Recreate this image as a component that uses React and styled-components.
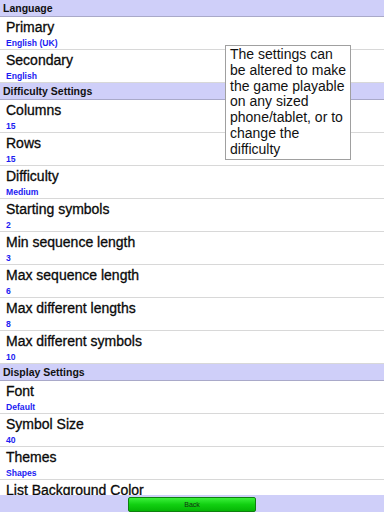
import React from "react";
import styled, { createGlobalStyle } from "styled-components";

const GlobalStyle = createGlobalStyle`
  html, body {
    margin: 0;
    padding: 0;
    background: #ffffff;
    font-family: "Liberation Sans", Arial, sans-serif;
  }
`;

const sections = [
  {
    title: "Language",
    items: [
      { name: "Primary", value: "English (UK)" },
      { name: "Secondary", value: "English" },
    ],
  },
  {
    title: "Difficulty Settings",
    items: [
      { name: "Columns", value: "15" },
      { name: "Rows", value: "15" },
      { name: "Difficulty", value: "Medium" },
      { name: "Starting symbols", value: "2" },
      { name: "Min sequence length", value: "3" },
      { name: "Max sequence length", value: "6" },
      { name: "Max different lengths", value: "8" },
      { name: "Max different symbols", value: "10" },
    ],
  },
  {
    title: "Display Settings",
    items: [
      { name: "Font", value: "Default" },
      { name: "Symbol Size", value: "40" },
      { name: "Themes", value: "Shapes" },
      { name: "List Background Color", value: "White" },
    ],
  },
];

export default function App() {
  return (
    <>
      <GlobalStyle />
      <Screen>
        <List>
          {sections.map((section) => (
            <React.Fragment key={section.title}>
              <SectionHeader>{section.title}</SectionHeader>
              {section.items.map((item) => (
                <Row key={item.name}>
                  <Title>{item.name}</Title>
                  <Summary>{item.value}</Summary>
                </Row>
              ))}
            </React.Fragment>
          ))}
        </List>
        <Footer>
          <BackButton>Back</BackButton>
        </Footer>
        <Tip>
          The settings can be altered to make the game playable on any sized
          phone/tablet, or to change the difficulty
        </Tip>
      </Screen>
    </>
  );
}

const Screen = styled.div`
  position: relative;
  width: 384px;
  height: 512px;
  display: flex;
  flex-direction: column;
  overflow: hidden;
`;

const List = styled.div`
  flex: 1;
  overflow: hidden;
  display: flex;
  flex-direction: column;
`;

const SectionHeader = styled.div`
  flex: none;
  height: 16px;
  line-height: 16px;
  padding-left: 3px;
  background: #cfcff9;
  border-bottom: 1px solid #a9a9c9;
  font-size: 10.5px;
  font-weight: bold;
  color: #111;
`;

const Row = styled.div`
  flex: none;
  height: 33px;
  padding: 2px 0 0 6px;
  box-sizing: border-box;
  border-bottom: 1px solid #d8d8d8;
  display: flex;
  flex-direction: column;

  &:last-child {
    border-bottom: none;
  }
`;

const Title = styled.div`
  font-size: 14px;
  line-height: 16px;
  color: #0a0a0a;
  -webkit-text-stroke: 0.3px #0a0a0a;
`;

const Summary = styled.div`
  margin-top: 3px;
  font-size: 8.6px;
  line-height: 11px;
  font-weight: bold;
  color: #1c1cf2;
`;

const Footer = styled.div`
  flex: none;
  height: 17px;
  background: #cfcff9;
  display: flex;
  justify-content: center;
  padding-top: 2px;
  box-sizing: border-box;
`;

const BackButton = styled.button`
  width: 128px;
  height: 15px;
  margin: 0;
  padding: 0;
  border: 1px solid #0e800e;
  border-radius: 2px;
  background: linear-gradient(#3af03a, #11d011 50%, #05b505);
  font-family: "Liberation Sans", Arial, sans-serif;
  font-size: 7px;
  color: #143014;
  line-height: 13px;
`;

const Tip = styled.div`
  position: absolute;
  left: 225px;
  top: 45px;
  width: 126px;
  box-sizing: border-box;
  padding: 1px 3px 1px 4px;
  background: #ffffff;
  border: 1px solid #a0a0a0;
  font-size: 14px;
  line-height: 15.8px;
  color: #111;
`;
